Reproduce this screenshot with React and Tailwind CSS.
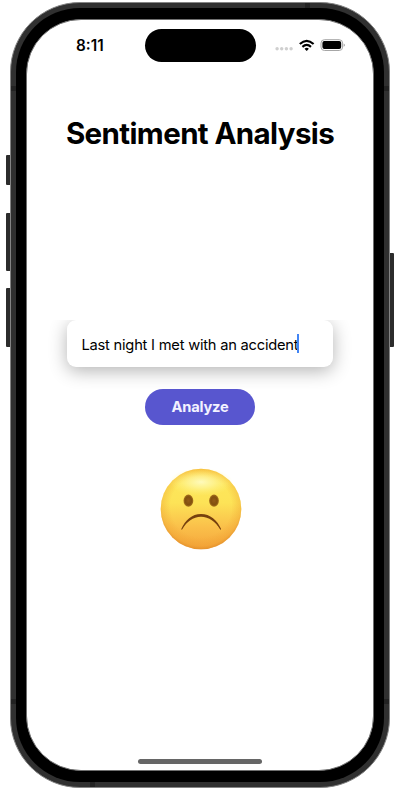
function SideButton({ className }) {
  return <div className={`w-full bg-[#2c2c2c] ${className}`} />;
}

function StatusIcons() {
  return (
    <svg className="ml-[19.5px] mt-[9.5px]" width="72" height="14" viewBox="0 0 72 14">
      <g fill="#cfcfcf">
        <circle cx="2.1" cy="9.7" r="1.7" />
        <circle cx="6.7" cy="9.7" r="1.7" />
        <circle cx="11.4" cy="9.7" r="1.7" />
        <circle cx="16.1" cy="9.7" r="1.7" />
      </g>
      <g fill="none" stroke="#000" strokeWidth="2.1">
        <path d="M24.8 5.1 Q31.7 -1.3 38.6 5.1" />
        <path d="M27.4 7.9 Q31.7 4 36 7.9" />
      </g>
      <path d="M29.5 9.7 Q31.7 7.8 33.9 9.7 L31.7 12 Z" />
      <rect x="46" y="0.7" width="21.6" height="10.8" rx="3.4" fill="#fff" stroke="#a6a6a6" />
      <rect x="47.4" y="2.1" width="18.8" height="8" rx="2" />
      <path d="M68.7 4.4 Q71.2 6.1 68.7 7.8 Z" fill="#a6a6a6" />
    </svg>
  );
}

function SadFace() {
  return (
    <svg className="ml-[2px] mt-[43px] shrink-0" width="82" height="82" viewBox="0 0 82 82">
      <defs>
        <linearGradient id="base" x1="0" y1="0" x2="0" y2="1">
          <stop offset="0" stopColor="#fbc93f" />
          <stop offset="0.18" stopColor="#fde65a" />
          <stop offset="0.42" stopColor="#fde357" />
          <stop offset="0.72" stopColor="#fac04a" />
          <stop offset="1" stopColor="#f5a63c" />
        </linearGradient>
        <radialGradient id="rim" cx="0.5" cy="0.47" r="0.54">
          <stop offset="0.7" stopColor="#ec982a" stopOpacity="0" />
          <stop offset="0.9" stopColor="#ec982a" stopOpacity="0.32" />
          <stop offset="1" stopColor="#d98324" stopOpacity="0.75" />
        </radialGradient>
        <radialGradient id="shine" cx="0.5" cy="0.5" r="0.5">
          <stop offset="0" stopColor="#fffdc8" stopOpacity="0.9" />
          <stop offset="0.4" stopColor="#fffbb0" stopOpacity="0.6" />
          <stop offset="1" stopColor="#fff580" stopOpacity="0" />
        </radialGradient>
        <radialGradient id="eye">
          <stop offset="0" stopColor="#945c18" />
          <stop offset="0.65" stopColor="#82500f" />
          <stop offset="1" stopColor="#a8731c" />
        </radialGradient>
      </defs>
      <circle cx="41" cy="41" r="40.3" fill="url(#base)" />
      <circle cx="41" cy="41" r="40.3" fill="url(#rim)" />
      <ellipse cx="41" cy="14" rx="32" ry="14" fill="url(#shine)" />
      <ellipse cx="28.4" cy="32.7" rx="4.9" ry="6.1" fill="url(#eye)" />
      <ellipse cx="54" cy="32.7" rx="4.9" ry="6.1" fill="url(#eye)" />
      <path
        d="M21.3 61 C25 52.2 32 45.9 41 45.9 C50 45.9 57.5 52.2 61.1 61 C61.3 61.8 60.4 62 60 61.3 C55.5 53.7 49 48.8 41 48.8 C33 48.8 26.8 53.7 22.3 61.3 C21.9 62 21 61.7 21.3 61 Z"
        fill="#76400e"
      />
    </svg>
  );
}

function AntennaBands() {
  return (
    <>
      <div className="absolute inset-0 flex flex-col justify-between py-[83px]">
        <div className="h-[5px] bg-[#222]" />
        <div className="h-[5px] bg-[#222]" />
      </div>
      <div className="absolute inset-0 flex justify-between px-[79px]">
        <div className="h-[5px] w-[5px] self-end bg-[#222]" />
        <div className="h-[5px] w-[5px] bg-[#222]" />
      </div>
    </>
  );
}

function StatusBar() {
  return (
    <div className="grid h-[52px] w-full shrink-0 grid-cols-[118px_110.5px_1fr] items-start pt-[9px]">
      <div className="pl-[49px] pt-[7.5px] text-[15.3px] font-semibold leading-[18px]">8:11</div>
      <div className="h-[33px] rounded-full bg-black" />
      <StatusIcons />
    </div>
  );
}

export default function App() {
  return (
    <div className="flex h-[789px] w-[400px] items-start overflow-hidden bg-white pl-[5.5px] pt-[2px] font-['Inter',sans-serif] text-black">
      <div className="flex w-[4.5px] flex-col pt-[153px]">
        <SideButton className="h-[30px] rounded-l-[1px]" />
        <SideButton className="mt-[28px] h-[58px] rounded-l-[1px]" />
        <SideButton className="mt-[17px] h-[58.5px] rounded-l-[1px]" />
      </div>

      <div className="relative h-[786px] w-[380px] shrink-0 overflow-hidden rounded-[70px] border border-[#858585] bg-[#303030] p-[5px]">
        <AntennaBands />
        <div className="relative h-full w-full rounded-[64px] bg-black px-[10px] py-[11px]">
          <div className="flex h-full w-full flex-col items-center overflow-hidden rounded-[55px] border border-[#6f6f6f] bg-white">
            <StatusBar />

            <h1 className="mt-[43px] whitespace-nowrap text-[29.5px] font-bold leading-9 tracking-[-0.62px]">
              Sentiment Analysis
            </h1>

            <div className="mt-[168.5px] flex h-[69px] w-full shrink-0 justify-center overflow-hidden">
              <div className="flex h-[47.5px] w-[266px] items-center rounded-[9px] bg-white pl-[14.5px] pt-[2.5px] shadow-[0_4px_18px_rgba(0,0,0,0.3)]">
                <span className="whitespace-nowrap text-[14.7px] leading-5 tracking-[-0.23px]">
                  Last night I met with an accident
                </span>
                <span className="-ml-px mb-[2px] h-[19px] w-[2px] bg-[#4285f5]" />
              </div>
            </div>

            <button className="h-[36px] w-[110.5px] shrink-0 rounded-full bg-[#5856cf] pt-px text-[14.7px] font-bold tracking-[-0.2px] text-[#f3f2ff]">
              Analyze
            </button>

            <SadFace />

            <div className="mb-[6.5px] mt-auto h-[4.5px] w-[123.5px] rounded-full bg-[#666]" />
          </div>
        </div>
      </div>

      <div className="w-[4px] pt-[250.5px]">
        <SideButton className="h-[94px] rounded-r-[1px]" />
      </div>
    </div>
  );
}
